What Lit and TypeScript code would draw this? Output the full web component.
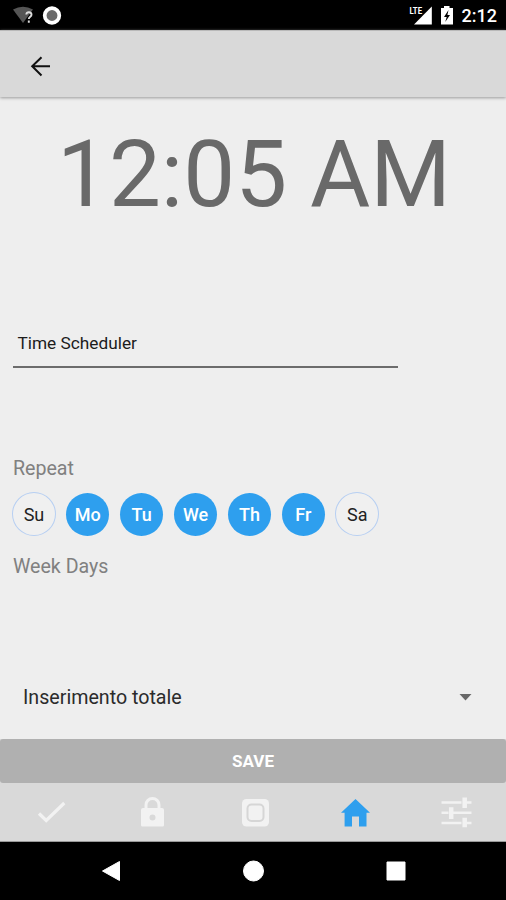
import { LitElement, html, css, svg } from "lit";
import { customElement, state } from "lit/decorators.js";
import { classMap } from "lit/directives/class-map.js";

const tabIcons = {
  check: svg`<path d="M6 19.5 13.2 26.5 31.3 9" fill="none" stroke="currentColor" stroke-width="3.2"/>`,
  lock: svg`<path fill-rule="evenodd" fill="currentColor" d="M10.5 14V11a8 8 0 0 1 16 0v3H28a2 2 0 0 1 2 2v15a1.500 1.500 0 0 1-1.500 1.500h-20A1.500 1.500 0 0 1 7 31V16a2 2 0 0 1 2-2zM13.500 14h10v-3a5 5 0 0 0-10 0zM18.500 20.500a3 3 0 1 0 0 6 3 3 0 0 0 0-6z"/>`,
  panel: svg`<rect x="7" y="5" width="27" height="27.500" rx="4.500" fill="currentColor"/><rect x="12.500" y="10.500" width="16" height="16.500" rx="4" fill="none" stroke="#d6d6d6" stroke-width="2"/>`,
  home: svg`<path fill="currentColor" d="M19.500 5 34 18.700h-3.500v13.800h-7.500v-10h-7v10H8.600V18.700H5z"/>`,
  tune: svg`<path fill="none" stroke="currentColor" stroke-width="2.600" d="M4.500 8.500h20M29 8.500h5.500M4.500 18.800h7M16 18.800h18.500M4.500 29h20M29 29h5.500"/><path fill="none" stroke="currentColor" stroke-width="4.500" d="M27.700 3.500v10.500M14.200 13.200v11.800M27.700 23.800v9.500"/>`,
};

@customElement("app-root")
export class AppRoot extends LitElement {
  static styles = css`
    :host { display: flex; flex-direction: column; height: 900px; background: #eee; font-family: Roboto, sans-serif; overflow: hidden; }
    svg { display: block; flex: none; }
    .status { height: 30px; box-sizing: border-box; padding: 0 9px 0 12px; background: #000; display: flex; align-items: center; justify-content: space-between; color: #fff; flex: none; }
    .group { display: flex; align-items: center; height: 30px; }
    .clock { font-size: 18px; font-weight: 500; line-height: 30px; margin-left: 8px; padding-top: 2px; }
    .lte { font: 700 9.500px/9px Roboto, sans-serif; }
    .bar { height: 67px; flex: none; background: #d9d9d9; border-top: 1px solid #b9b9b9; box-sizing: border-box; box-shadow: 0 1px 3px #999; padding: 24px 0 0 28px; }
    main { flex: 1; display: flex; flex-direction: column; }
    .time { margin: 23px 0 0 57px; height: 110px; line-height: 110px; font-size: 92.400px; color: #696969; white-space: nowrap; }
    .name { margin: 91px 0 0 13px; width: 385px; height: 47px; box-sizing: border-box; border-bottom: 2px solid #6c6c6c; padding-left: 4.500px; font-size: 17.250px; line-height: 45px; color: #1c1c1c; }
    .label { margin-left: 13px; height: 30px; line-height: 30px; font-size: 19.600px; color: #808080; }
    .repeat { margin-top: 86px; }
    .days { display: flex; align-items: center; gap: 10px; height: 44px; margin: 8px 0 0 12px; }
    .day { width: 43.900px; height: 44px; box-sizing: border-box; border-radius: 50%; display: flex; align-items: center; justify-content: center; font-size: 18px; color: #222; border: 1px solid #b7cff2; background: #f0f0f0; }
    .day.on { width: 42.900px; height: 43px; margin: 0 .5px; border: 0; background: #2e9fee; color: #fff; font-weight: 500; }
    .summary { margin-top: 16px; }
    .select { margin-top: auto; height: 84px; display: flex; align-items: center; justify-content: space-between; padding: 0 34px 0 23px; font-size: 19.650px; color: #2b2b2b; }
    .save { height: 44px; flex: none; border-radius: 3px; background: #b0b0b0; color: #fff; font-size: 17px; font-weight: 700; display: flex; align-items: center; justify-content: center; }
    .foot { background: #d9d9d9; flex: none; }
    .tabs { height: 59px; box-sizing: border-box; padding: 0 0 0 1px; display: grid; grid-template-columns: repeat(5, 101px); justify-items: center; align-items: center; border-bottom: 1px solid #999; color: #f2f2f2; }
    .active { color: #2e9fee; }
    .nav { height: 58px; background: #000; display: flex; justify-content: center; flex: none; }
  `;

  @state() private selected = new Set(["Mo", "Tu", "We", "Th", "Fr"]);

  private toggle(day: string) {
    const next = new Set(this.selected);
    next.has(day) ? next.delete(day) : next.add(day);
    this.selected = next;
  }

  render() {
    return html`
      <div class="status">
        <div class="group">
          <svg width="52" height="30" viewBox="12 0 52 30">
            <path d="M13 9.500Q23 4 33 9.500L23 23z" fill="#555"/>
            <path d="M26.300 14.500c.3-3 5.200-3 5.200.2 0 2-2.700 2.200-2.700 4.400M28.800 20.500v2.300" fill="none" stroke="#ddd" stroke-width="1.900"/>
            <circle cx="52" cy="15.500" r="7.300" fill="#6a6a6a" stroke="#fff" stroke-width="3.700"/>
          </svg>
        </div>
        <div class="group">
          <svg width="46" height="30" viewBox="409 0 46 30">
            <path d="M415 24.500 432.800 6.500v18z" fill="#fff"/>
            <text class="lte" x="410.500" y="14" textLength="12.500" lengthAdjust="spacingAndGlyphs" fill="#fff" stroke="#000" stroke-width="1.200" paint-order="stroke">LTE</text>
            <path d="M445 6h5.500v2h3.500v16.500h-12V8h3z" fill="#fff"/>
            <path d="M449.500 10 445 17h2.700l-1.500 5 4.800-7h-2.600z" fill="#000"/>
          </svg>
          <span class="clock">2:12</span>
        </div>
      </div>
      <div class="bar">
        <svg width="26" height="24" viewBox="28.500 55 26 24"><path d="M50.500 66.300H33M42 57.200 32.700 66.300 42 75.500" fill="none" stroke="#111" stroke-width="2"/></svg>
      </div>
      <main>
        <div class="time">12:05 AM</div>
        <div class="name">Time Scheduler</div>
        <div class="label repeat">Repeat</div>
        <div class="days">
          ${["Su", "Mo", "Tu", "We", "Th", "Fr", "Sa"].map(
            (d) => html`<div class=${classMap({ day: true, on: this.selected.has(d) })} @click=${() => this.toggle(d)}>${d}</div>`
          )}
        </div>
        <div class="label summary">Week Days</div>
        <div class="select">
          <span>Inserimento totale</span>
          <svg width="13" height="8" viewBox="0 0 13 8"><path d="M.5 1h12L6.500 7.500z" fill="#686868"/></svg>
        </div>
      </main>
      <div class="foot">
        <div class="save">SAVE</div>
        <div class="tabs">
          ${Object.entries(tabIcons).map(
            ([id, icon]) => html`<svg class=${classMap({ active: id === "home" })} width="37" height="36" viewBox="0 0 37 36">${icon}</svg>`
          )}
        </div>
      </div>
      <div class="nav">
        <svg width="506" height="58" viewBox="0 842 506 58" fill="#fff" stroke="#fff" stroke-linejoin="round">
          <path d="M102.500 871 119.500 861.500v19z"/>
          <circle cx="253.500" cy="871" r="10"/>
          <rect x="387" y="862" width="18" height="18"/>
        </svg>
      </div>
    `;
  }
}
